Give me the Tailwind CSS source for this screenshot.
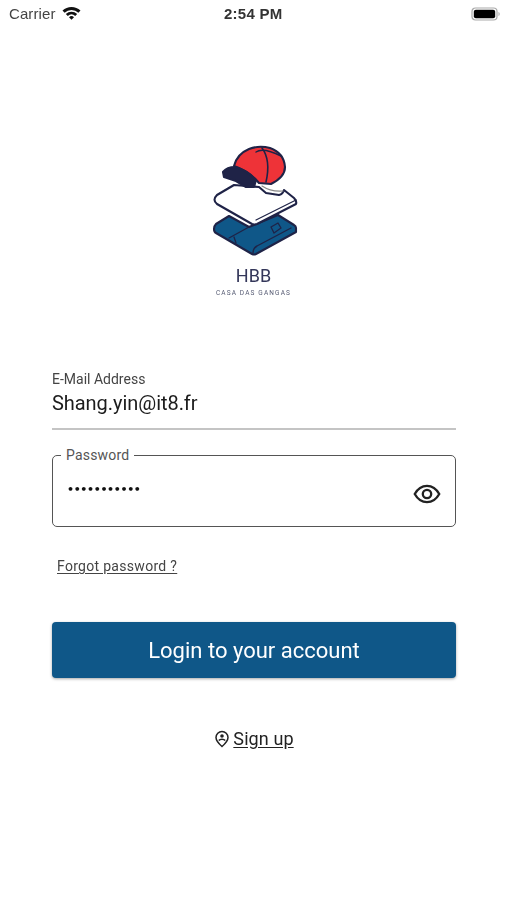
<!DOCTYPE html>
<html lang="en">

<head>
  <meta charset="UTF-8">
  <title>HBB Login</title>
  <script src="https://cdn.jsdelivr.net/npm/@tailwindcss/browser@4"></script>
</head>

<body class="bg-white min-h-screen font-['Roboto',sans-serif]">
  <div class="w-[507px] h-[900px] overflow-hidden flex flex-col blur-[0.3px]">
    <!-- Status bar -->
    <div class="h-[28px] flex items-center justify-between pl-[9px] pr-[6px] relative text-[#222] font-['Liberation_Sans',sans-serif]">
      <div class="flex items-center gap-[6px]">
        <span class="text-[15px] tracking-[0.1px] text-[#444]">Carrier</span>
        <svg width="19" height="14" viewBox="0 0 19 14" class="mb-[3px]">
          <path d="M0.5 4.6 A13 13 0 0 1 18.5 4.6 L16.4 6.8 A10 10 0 0 0 2.6 6.8 Z" fill="#111" />
          <path d="M3.8 8 A8.4 8.4 0 0 1 15.2 8 L13.2 10 A5.6 5.6 0 0 0 5.8 10 Z" fill="#111" />
          <path d="M7 11.2 A3.6 3.6 0 0 1 12 11.2 L9.5 13.8 Z" fill="#111" />
        </svg>
      </div>
      <span class="absolute left-[224px] text-[15px] font-bold tracking-[0.25px] text-[#333]">2:54 PM</span>
      <svg width="30" height="14" viewBox="0 0 30 14">
        <rect x="1" y="1" width="25" height="12" rx="3.5" fill="none" stroke="#aaa" stroke-width="1.2" />
        <rect x="2.8" y="2.8" width="21.4" height="8.4" rx="2" fill="#000" />
        <path d="M27.5 5 C29 5.4 29 8.6 27.5 9 Z" fill="#aaa" />
      </svg>
    </div>

    <!-- Logo -->
    <div class="mt-[112px] flex flex-col items-center">
      <svg width="95" height="120" viewBox="205 140 95 120">
        <g stroke="#1f2347" stroke-width="2.1" stroke-linejoin="round" stroke-linecap="round">
          <!-- pants -->
          <path d="M215 224 L228 216 L248 227 L277 215 L293 225 Q295 226 295 228 L295 232 L255 254 Q253 255 251 254 L215 233 Q213 232 213 229 Q213 226 215 224 Z" fill="#0f5788" />
          <path d="M228 238 L248 227" fill="none" stroke-width="1.3" />
          <path d="M233 237 L235 243" fill="none" stroke-width="1.3" />
          <path d="M252 253 Q252 248 256 246 L290 228" fill="none" stroke-width="1.4" />
          <path d="M270 227 L277 223 L280 228 L273 233 Z" fill="#0f5788" stroke-width="1.3" />
          <!-- shirt -->
          <path d="M216 195 L233 185 L258 187 L265 193 L278 195 Q282 194 283 190 L293 198 Q296 201 295 204 L256 224 Q253 225 251 224 L216 204 Q211 200 216 195 Z" fill="#fff" />
          <path d="M255 220 L295 200" fill="none" stroke-width="1.2" />
          <path d="M261 186 Q270 192 282 191" fill="none" stroke-width="1.2" stroke="#888" />
          <!-- cap -->
          <path d="M233 166 Q236 154 248 149 Q258 145 269 148 Q283 153 284 167 Q284 177 270 184 L258 183 Q248 171 233 166 Z" fill="#ee3338" />
          <path d="M261 148 Q270 160 265 182" fill="none" stroke-width="1.6" />
          <path d="M255 152 Q262 147 280 156" fill="none" stroke-width="1.4" />
          <path d="M222 172 Q226 167 234 167 Q246 170 255 180 L253 187 L245 187 L235 181 L223 177 Z" fill="#1f2347" />
        </g>
      </svg>
      <div class="mt-[6px] text-[18px] leading-[20px] text-[#34375a]">HBB</div>
      <div class="mt-[2px] text-[6.5px] leading-[10px] text-[#555a72] tracking-[1.15px]">CASA DAS GANGAS</div>
    </div>

    <!-- Form -->
    <div class="mt-[73px] px-[52px] w-[508px]">
      <div class="text-[14px] leading-[16px] text-[#444]">E-Mail Address</div>
      <div class="mt-[3px] text-[20px] leading-[26px] tracking-[-0.05px] text-[#1c1c1c]">Shang.yin@it8.fr</div>
      <div class="mt-[12px] h-[2px] bg-[#c4c4c4]"></div>

      <div class="relative mt-[25px] h-[72px] border-[1.5px] border-[#555] rounded-[5px] flex items-center justify-between pl-[14px] pr-[14px]">
        <span class="absolute left-[8px] top-[-9px] bg-white px-[5px] text-[14px] leading-[16px] text-[#555] tracking-[0.2px]">Password</span>
        <span class="text-[#111] text-[11px] font-bold tracking-[-0.35px] mb-[2px] font-['DejaVu_Sans',sans-serif]">•••••••••••</span>
        <svg width="28" height="28" viewBox="0 0 24 24" fill="none" stroke="#222" stroke-width="2" class="mr-[0px] mt-[5px]">
          <path d="M1.5 12 C4 7.5 7.5 5 12 5 C16.5 5 20 7.5 22.5 12 C20 16.5 16.5 19 12 19 C7.5 19 4 16.5 1.5 12 Z" />
          <circle cx="12" cy="12" r="3.6" />
        </svg>
      </div>

      <a href="#" class="block mt-[30px] ml-[5px] text-[14px] leading-[18px] text-[#444] underline underline-offset-2 tracking-[0.3px]">Forgot password ?</a>

      <button class="mt-[47px] w-full h-[56px] bg-[#0f5788] text-white text-[22px] rounded-[4px] shadow-[0_1px_3px_rgba(0,0,0,0.35)]">Login to your account</button>

      <div class="mt-[50px] flex items-center justify-center gap-[3px] text-[#222]">
        <svg width="16" height="18" viewBox="0 0 16 18" fill="none" stroke="#222" stroke-width="1.5">
          <path d="M8 16.5 C4 13 2 10.5 2 7.5 A6 6 0 0 1 14 7.5 C14 10.5 12 13 8 16.5 Z" />
          <circle cx="8" cy="6" r="1.8" fill="#222" stroke="none" />
          <path d="M4.8 10.5 C6 8.8 10 8.8 11.2 10.5" stroke-width="1.4" />
        </svg>
        <a href="#" class="text-[18px] leading-[22px] tracking-[0.1px] underline underline-offset-2">Sign up</a>
      </div>
    </div>
  </div>
</body>

</html>
